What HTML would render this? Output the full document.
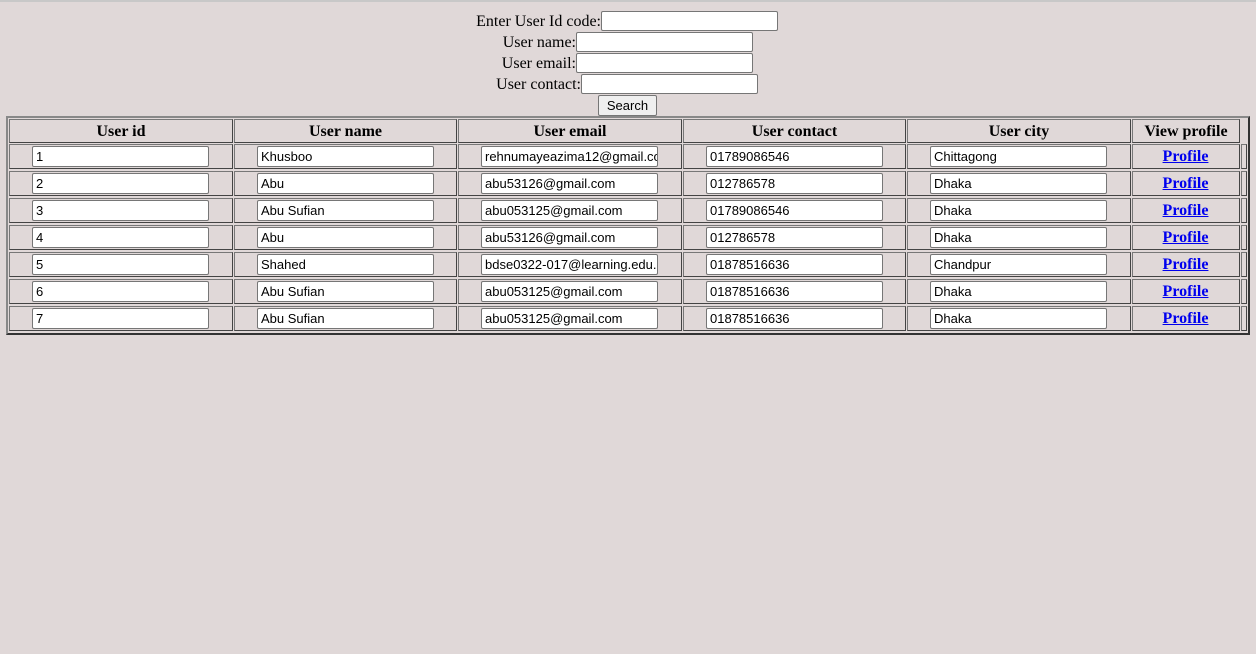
<!DOCTYPE html>
<html><head><style>
body{margin:0;width:1256px;height:654px;background:#e0d8d8;position:relative;overflow:hidden;font-family:"Liberation Serif",serif;font-size:16px;color:#000}
.top{position:absolute;left:0;top:0;width:1256px;height:2px;background:#c8c8c8}
.a{position:absolute}
.lbl{position:absolute;height:21px;line-height:23px;text-align:right;white-space:nowrap}
.in{position:absolute;box-sizing:border-box;background:#fff;border:1px solid #767676;border-radius:2px;height:20px;font-family:"Liberation Sans",sans-serif;font-size:13px;line-height:20px;padding-left:3px;overflow:hidden;white-space:nowrap}
.c{position:absolute;box-sizing:border-box;border:1px solid #444;border-top-color:#777;border-left-color:#777}
.th{font-weight:bold;text-align:center;line-height:23px}
.p{position:absolute;font-weight:bold;color:#00e;text-decoration:underline;text-align:center;width:107px}
.btn{position:absolute;box-sizing:border-box;background:#efefef;border:1px solid #767676;border-radius:2px;font-family:"Liberation Sans",sans-serif;font-size:13px;text-align:center;line-height:19px}
</style></head><body>
<div class="top"></div>
<div class="lbl" style="left:400px;width:201px;top:10px">Enter User Id code:</div><div class="in" style="left:601px;top:11px;width:177px"></div>
<div class="lbl" style="left:400px;width:176px;top:31px">User name:</div><div class="in" style="left:576px;top:32px;width:177px"></div>
<div class="lbl" style="left:400px;width:176px;top:52px">User email:</div><div class="in" style="left:576px;top:53px;width:177px"></div>
<div class="lbl" style="left:400px;width:181px;top:73px">User contact:</div><div class="in" style="left:581px;top:74px;width:177px"></div>
<div class="btn" style="left:598px;top:95px;width:59px;height:21px">Search</div>
<div class="a" style="left:6px;top:116px;width:1244px;height:219px;box-sizing:border-box;border:2px solid #333;border-top-color:#888;border-left-color:#888"></div>
<div id="t"></div>
<script>
var L=[9,234,458,683,907,1132],W=[224,223,224,223,224,108];
var H=["User id","User name","User email","User contact","User city","View profile"];
var D=[["1","Khusboo","rehnumayeazima12@gmail.com","01789086546","Chittagong"],
["2","Abu","abu53126@gmail.com","012786578","Dhaka"],
["3","Abu Sufian","abu053125@gmail.com","01789086546","Dhaka"],
["4","Abu","abu53126@gmail.com","012786578","Dhaka"],
["5","Shahed","bdse0322-017@learning.edu.bd","01878516636","Chandpur"],
["6","Abu Sufian","abu053125@gmail.com","01878516636","Dhaka"],
["7","Abu Sufian","abu053125@gmail.com","01878516636","Dhaka"]];
var h="";
for(var i=0;i<6;i++)h+='<div class="c th" style="left:'+L[i]+'px;top:119px;width:'+W[i]+'px;height:24px">'+H[i]+'</div>';
for(var r=0;r<7;r++){var y=144+27*r;
for(var i=0;i<6;i++){h+='<div class="c" style="left:'+L[i]+'px;top:'+y+'px;width:'+W[i]+'px;height:25px"></div>';
if(i<5)h+='<div class="in" style="left:'+(L[i]+23)+'px;top:'+(y+2)+'px;width:177px;height:21px">'+D[r][i]+'</div>';
else h+='<div class="p" style="left:1132px;top:'+(y+4)+'px">Profile</div>';}
h+='<div class="c" style="left:1241px;top:'+y+'px;width:6px;height:25px"></div>';}
document.getElementById("t").innerHTML=h;
</script>
</body></html>
